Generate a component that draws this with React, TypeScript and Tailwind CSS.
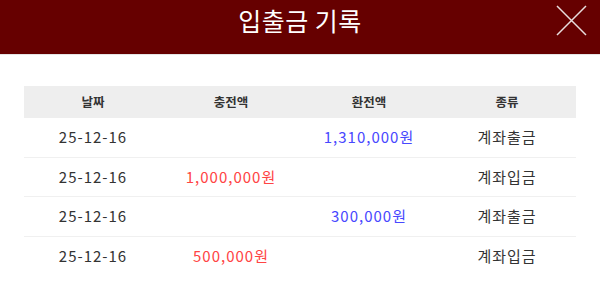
const rows = [
  { date: "25-12-16", charge: "", exchange: "1,310,000원", kind: "계좌출금" },
  { date: "25-12-16", charge: "1,000,000원", exchange: "", kind: "계좌입금" },
  { date: "25-12-16", charge: "", exchange: "300,000원", kind: "계좌출금" },
  { date: "25-12-16", charge: "500,000원", exchange: "", kind: "계좌입금" },
];

export default function App() {
  return (
    <div
      className="w-[600px] h-[288px] bg-white overflow-hidden"
      style={{ fontFamily: '"Noto Sans CJK KR", "Noto Sans", sans-serif' }}
    >
      <div className="relative h-[55px] bg-[#660000] flex justify-center border-b border-[#e5e5e5]">
        <p className="text-white text-[25px] leading-none pt-[8px] tracking-[0.5px]">입출금 기록</p>
        <button className="absolute right-[13px] top-[5px] w-[31px] h-[31px]">
          <svg viewBox="0 0 31 31" width="31" height="31">
            <path d="M1 1 L30 30 M30 1 L1 30" stroke="#e8dede" strokeWidth="1.5" fill="none" />
          </svg>
        </button>
      </div>
      <div className="px-[24px] pt-[31px]">
        <div className="grid grid-cols-4 h-[32px] bg-[#eeeeee] items-center text-center text-[12.5px] font-bold text-[#333]">
          <span>날짜</span>
          <span>충전액</span>
          <span>환전액</span>
          <span>종류</span>
        </div>
        {rows.map((r, i) => (
          <div
            key={i}
            className={`grid grid-cols-4 h-[39.5px] items-center text-center text-[15px] tracking-[1px] text-[#333] ${
              i < rows.length - 1 ? "border-b border-[#f0f0f0]" : ""
            }`}
          >
            <span>{r.date}</span>
            <span className="text-[#ff4444]">{r.charge}</span>
            <span className="text-[#4848ff]">{r.exchange}</span>
            <span>{r.kind}</span>
          </div>
        ))}
      </div>
    </div>
  );
}
